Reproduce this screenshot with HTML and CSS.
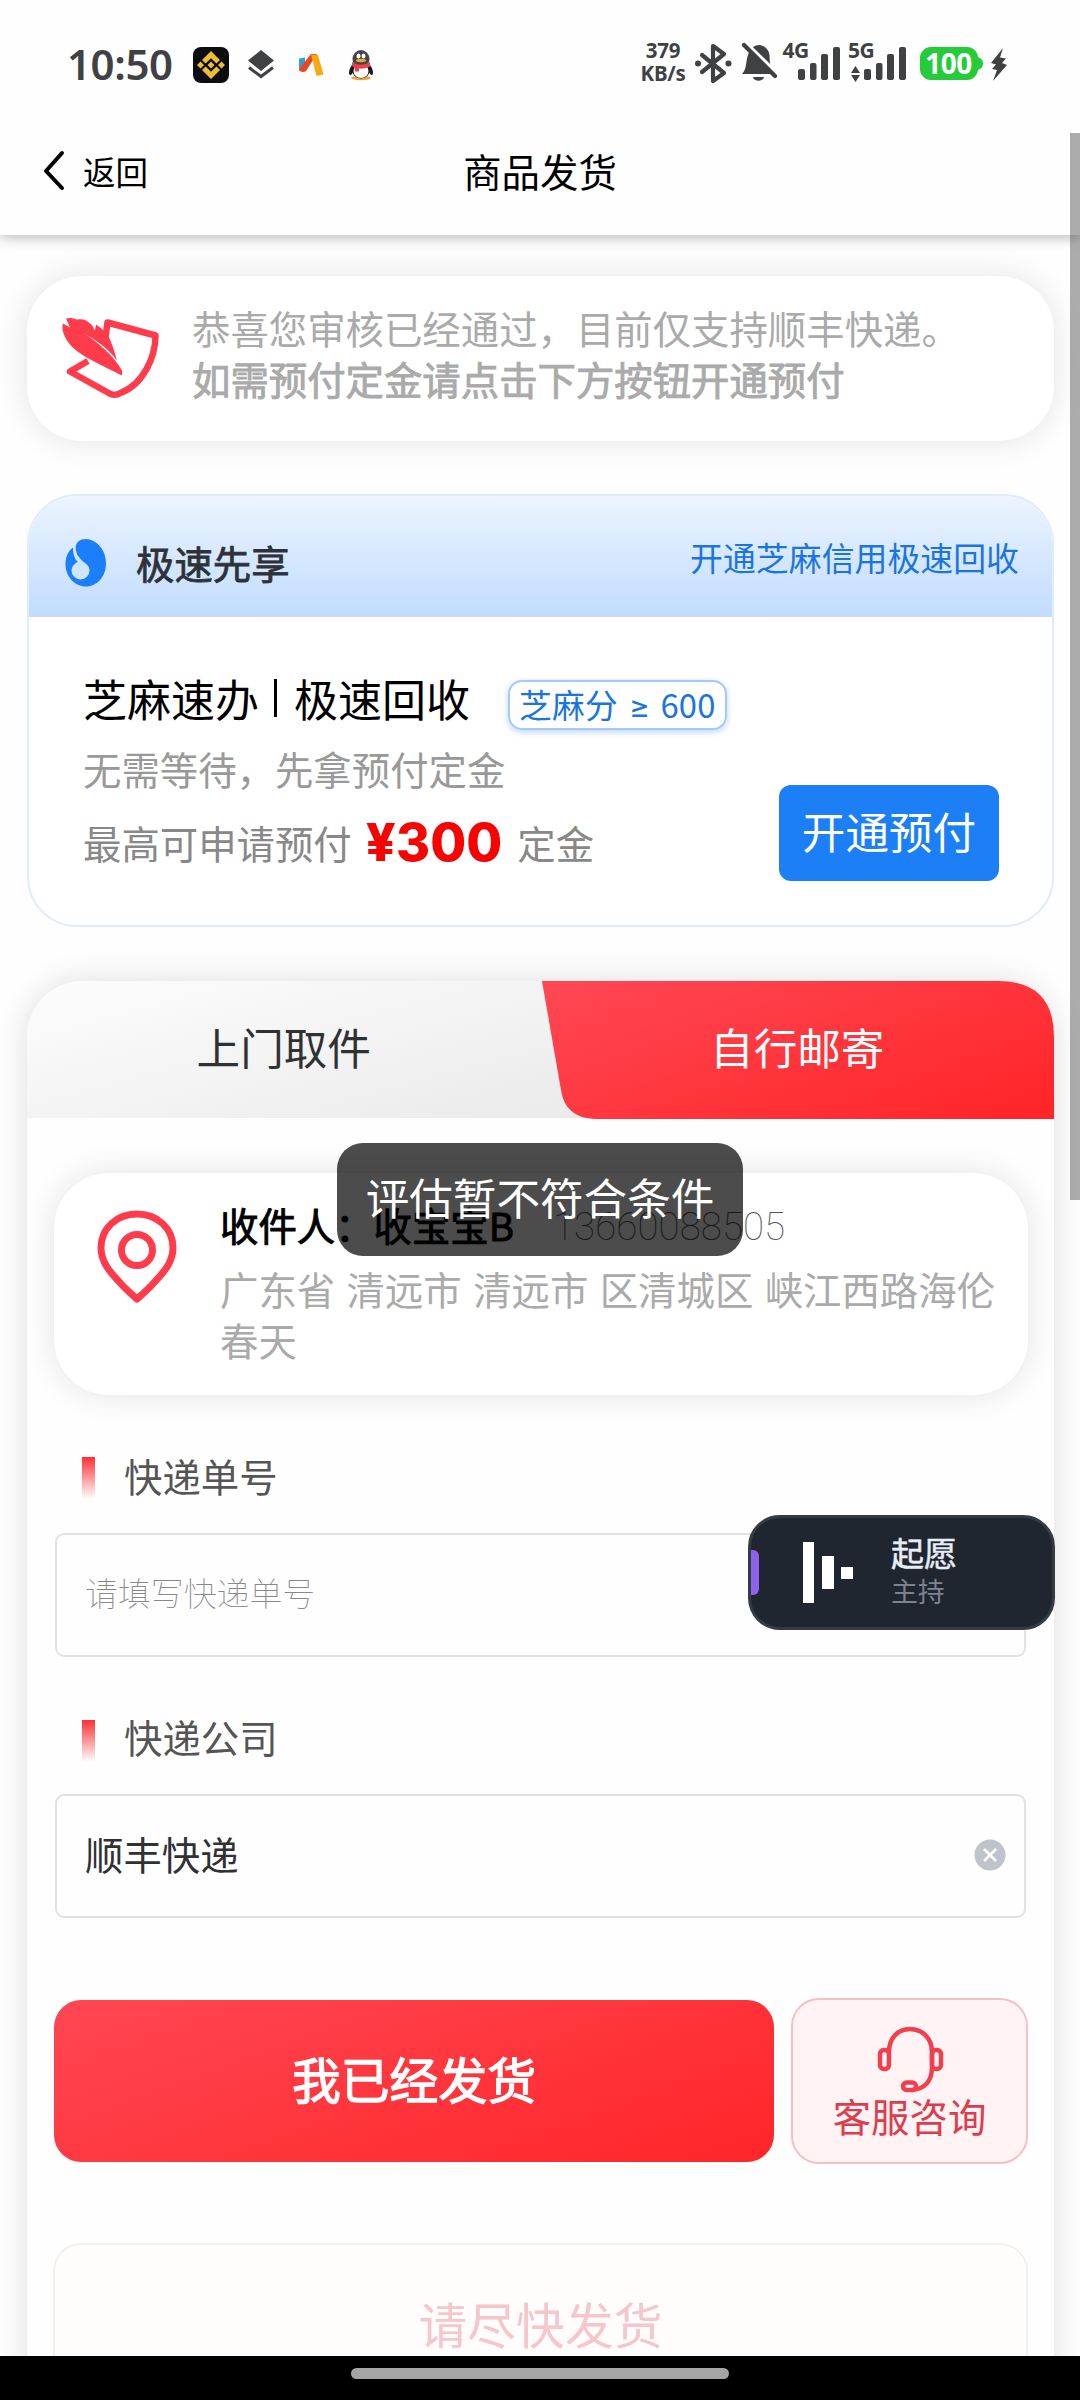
FILE: index.html
```html
<!DOCTYPE html>
<html lang="zh-CN">
<head>
<meta charset="utf-8">
<title>商品发货</title>
<link rel="stylesheet" href="styles.css">
</head>
<body>
<div class="screen">
  <div class="status">
    <span class="clock">10:50</span>
    <svg class="app-icons" width="190" height="44" viewBox="190 42 190 44">
      <rect x="193" y="47" width="36" height="36" rx="8" fill="#0b0d10"/>
      <g fill="#edbd33">
        <path d="M211 51l9 9-3.6 3.6-5.4-5.4-5.4 5.4-3.6-3.6zM211 79l9-9-3.6-3.6-5.4 5.4-5.4-5.4-3.6 3.6zM211 61.500l3.500 3.500-3.500 3.500-3.500-3.500zM200.500 61.500l3.500 3.500-3.500 3.500-3.500-3.500zM221.500 61.500l3.500 3.500-3.500 3.500-3.500-3.500z"/>
      </g>
      <path d="M261 50l13 10.500-13 10.500-13-10.500z" fill="#404143"/>
      <path d="M249 67.500l12 9 12-9" fill="none" stroke="#404143" stroke-width="3"/>
      <path d="M299 58.500l6-1v13h-6z" fill="#2ea0dc"/>
      <path d="M311 54h6l-11 17c-2 2-7 1-7-2z" fill="#e8481f"/>
      <path d="M311 54.500l7 .5 5.500 19.500-7 1.500z" fill="#f6ab13"/>
      <ellipse cx="361" cy="78" rx="10" ry="2.200" fill="#eda53a"/>
      <path d="M353 64c-4 4-5 10-3 11 2 0 2-2 3-3zM369 64c4 4 5 10 3 11-2 0-2-2-3-3z" fill="#17191c"/>
      <ellipse cx="361" cy="70" rx="9" ry="8.500" fill="#17191c"/>
      <ellipse cx="361" cy="71" rx="7.500" ry="7" fill="#fff"/>
      <ellipse cx="361" cy="59" rx="8.500" ry="9" fill="#44464a"/>
      <ellipse cx="358.500" cy="56" rx="2" ry="2.500" fill="#fff"/><ellipse cx="363.500" cy="56" rx="2" ry="2.500" fill="#fff"/>
      <ellipse cx="361" cy="60.500" rx="5" ry="1.700" fill="#eca62e"/>
      <path d="M352 62c5 3.500 13 3.500 18 0v4.500c-3 1.500-7 2.500-11 2v3h-4v-4c-2-.5-3-1.500-3-2z" fill="#ee3f50"/>
    </svg>
    <span class="rate"><b>379</b><b>KB/s</b></span>
    <svg class="sys-icons" width="320" height="44" viewBox="690 40 320 44">
      <g fill="none" stroke="#404143" stroke-width="4.200" stroke-linecap="round" stroke-linejoin="round">
        <path d="M702 55l22 18-11 8V46l11 8-22 18"/>
      </g>
      <circle cx="698" cy="63.500" r="3" fill="#404143"/><circle cx="728.500" cy="63.500" r="3" fill="#404143"/>
      <path d="M742 74c5-5 3.500-12 6-19 2-7 7-10 11-10s10 4 10.500 10c.5 7 0 14 6 19z" fill="#404143"/>
      <path d="M753 77h11c-1 5-10 5-11 0z" fill="#404143"/>
      <path d="M744.500 42.500l34 33" stroke="#fff" stroke-width="5"/>
      <path d="M744 45l31 31" stroke="#404143" stroke-width="4.200" stroke-linecap="round"/>
      <text class="net" x="782.500" y="58">4G</text>
      <text class="net" x="848" y="58">5G</text>
      <g fill="#404143">
        <rect x="798" y="69" width="7" height="11" rx="2"/><rect x="810" y="63" width="6.500" height="17" rx="2"/><rect x="821" y="54" width="7" height="26" rx="2"/><rect x="833" y="47" width="7" height="33" rx="2"/>
        <rect x="864" y="69" width="7" height="11" rx="2"/><rect x="876" y="63" width="6.500" height="17" rx="2"/><rect x="887" y="54" width="7" height="26" rx="2"/><rect x="899" y="47" width="7" height="33" rx="2"/>
        <path d="M851 73l4.500-7 4.500 7zM851 75h9l-4.500 7z"/>
        <path d="M1003 48l-12 15 5 1.500-4 4.500 5 1-4 11 14-16-5-2 4-4.500-6-1z"/>
      </g>
      <rect x="920" y="47" width="58" height="33" rx="11" fill="#25cb3a"/>
      <path d="M977 57q6 1 6 6.500t-6 6.500z" fill="#25cb3a"/>
      <text class="pct" x="948.500" y="73.500" text-anchor="middle">100</text>
    </svg>
  </div>

  <div class="nav">
    <div class="back">
      <svg width="24" height="42" viewBox="0 0 24 42"><path d="M20 3L4 21l16 17" fill="none" stroke="#000" stroke-width="4" stroke-linecap="round" stroke-linejoin="round"/></svg>
      <span>返回</span>
    </div>
    <div class="title">商品发货</div>
  </div>

  <div class="content">
    <div class="card notice">
      <svg width="100" height="84" viewBox="60 317 100 84">
        <path d="M105 342l2.500-18.500 48 13c0 21-12 49-35 57.500q-5 3-10 1L70 372.500 88 362" fill="none" stroke="#ff3b4c" stroke-width="6.500" stroke-linejoin="round"/>
        <path d="M66 319.500c4-1 7-.5 11 1 6-1 9 0 13 4 3 2 3 4 5 7l1-6c7 5 11 9 14 15 3 7 5 14 7 21-9-12-20-20-33-27 14 9 29 21 38 37v5c-19-10-42-19-52-31-6-7-9-16-7-21l7 4z" fill="#ff3b4c"/>
      </svg>
      <div class="notice-text"><p>恭喜您审核已经通过，目前仅支持顺丰快递。</p><p class="medium">如需预付定金请点击下方按钮开通预付</p></div>
    </div>

    <div class="credit">
      <div class="credit-head">
        <svg width="42" height="48" viewBox="0 0 42 48">
          <path d="M21 0c12 1 20 12 20 24 0 14-9 23.500-20 23.500S.5 38 .5 25C.5 18 3 12 8 8.500c0 6 1 9 3.500 13.500C14 18 11 14 10.500 9 11 3 15 0 21 0z" fill="#1b7ffb"/>
          <path d="M9.500 9c-2.500 6 3 9 3 14-4 2-6 5-6 8.500a9 9 0 0018 0c0-6-5-7-8.500-11-3-4-6-6-5.500-12z" fill="#d2e5fe"/>
        </svg>
        <span class="credit-title">极速先享</span>
        <span class="credit-link">开通芝麻信用极速回收</span>
      </div>
      <div class="credit-body">
        <div class="credit-info">
          <div class="fast"><span>芝麻速办</span><i></i><span>极速回收</span><span class="badge">芝麻分<span class="ge">≥</span>600</span></div>
          <p class="wait">无需等待，先拿预付定金</p>
          <p class="max">最高可申请预付<strong>¥300</strong>定金</p>
        </div>
        <div class="open">开通预付</div>
      </div>
    </div>

    <div class="ship">
      <div class="tabs">
        <svg class="tab-bg" width="513" height="138" viewBox="0 0 513 138">
          <defs><linearGradient id="red" gradientUnits="userSpaceOnUse" x1="208" y1="-64" x2="305" y2="202"><stop offset="0" stop-color="#ff4753"/><stop offset="1" stop-color="#ff2528"/></linearGradient></defs>
          <path d="M1 0h456q56 0 56 56v82H54q-30-1-34-29z" fill="url(#red)"/>
        </svg>
        <div class="tab">上门取件</div><div class="tab active">自行邮寄</div>
      </div>
      <div class="card address">
        <svg width="82" height="96" viewBox="0 0 82 96"><path d="M41 6C21 6 5 20 5 40c0 16 12 27 22 38q7 7 14 13 7-6 14-13c10-11 22-22 22-38C77 20 61 6 41 6z" fill="none" stroke="#ff3b4c" stroke-width="7" stroke-linejoin="round"/><circle cx="41" cy="42" r="15.500" fill="none" stroke="#ff3b4c" stroke-width="7"/></svg>
        <div class="addr-text">
          <div class="who"><span class="medium">收件人：收宝宝B</span><span class="phone">13660088505</span></div>
          <p>广东省 清远市 清远市 区清城区 峡江西路海伦春天</p>
        </div>
      </div>
      <div class="label"><i></i>快递单号</div>
      <div class="field placeholder">请填写快递单号</div>
      <div class="label second"><i></i>快递公司</div>
      <div class="field"><span>顺丰快递</span>
        <svg width="32" height="32" viewBox="0 0 32 32"><circle cx="16" cy="16" r="15.500" fill="#bfc4cc"/><path d="M10 10l12 12M22 10L10 22" stroke="#fff" stroke-width="2.600"/></svg>
      </div>
      <div class="actions">
        <div class="sent">我已经发货</div>
        <div class="service">
          <svg width="68" height="68" viewBox="876 2025 68 68" fill="none" stroke="#f23f50" stroke-width="4.500"><path d="M889 2052c0-14 9-23 21-23s22 9 22 23v15c0 14-7 22-20 23"/><rect x="880" y="2050" width="9" height="19" rx="4"/><rect x="932" y="2050" width="9" height="19" rx="4"/><rect x="903" y="2082.500" width="13" height="7.500" rx="3.700"/></svg>
          <span>客服咨询</span>
        </div>
      </div>
      <div class="hurry">请尽快发货</div>
    </div>
  </div>

  <div class="home"><i></i></div>

  <div class="scroll"></div>
  <div class="toast">评估暂不符合条件</div>
  <div class="meeting">
    <i class="mark"></i>
    <svg width="50" height="62" viewBox="0 0 50 62" fill="#fff"><path d="M0 0h11v61H0zM19 14h12v33H19zM38 25h12v12H38z"/></svg>
    <div class="meeting-text"><b>起愿</b><span>主持</span></div>
  </div>
</div>
</body>
</html>
```
FILE: styles.css
```css
* { box-sizing: border-box; }
body { margin: 0; background: #fefefe; }
p { margin: 0; }
i { display: block; font-style: normal; }

.screen {
  position: relative;
  display: flex;
  flex-direction: column;
  width: 1080px;
  height: 2400px;
  overflow: hidden;
  background: #fefefe;
  font: 400 38.4px/51px "Noto Sans CJK SC", sans-serif;
  color: #000;
}
.medium { -webkit-text-stroke: 0.9px currentColor; }

/* system status bar */
.status {
  display: flex;
  flex: none;
  align-items: center;
  height: 130px;
  padding: 0 70px 2px 67px;
  color: #404143;
}
.clock { width: 123px; font: 600 42px/44px "Noto Sans", sans-serif; letter-spacing: -0.4px; }
.app-icons { flex: none; }
.rate {
  display: flex;
  flex-direction: column;
  align-items: center;
  width: 50px;
  margin: 0 1px 4px 258px;
  font: 700 20.500px/23px "Noto Sans", sans-serif;
  letter-spacing: -0.3px;
}
.rate b { font-weight: 700; }
.sys-icons { flex: none; margin: 0 0 4px 1px; overflow: visible; }
.net { font: 700 21px "Noto Sans", sans-serif; fill: #404143; letter-spacing: -0.5px; }
.pct { font: 700 28px "Noto Sans", sans-serif; fill: #fff; letter-spacing: -0.5px; }

/* page header */
.nav {
  display: grid;
  grid-template-columns: 1fr auto 1fr;
  flex: none;
  align-items: center;
  height: 105px;
  padding: 0 42px 24px;
  box-shadow: 0 3px 12px rgba(0, 0, 0, 0.26);
  clip-path: inset(0 0 -20px 0);
}
.back { display: flex; align-items: center; gap: 17px; font-size: 32.500px; }
.title { line-height: 81px; }

.content { flex: 1; min-height: 0; overflow: hidden; padding: 41px 26px 0 27px; clip-path: inset(0); }
.card { background: #fff; border-radius: 55px; box-shadow: 0 0 32px rgba(0, 0, 0, 0.11); }

.notice { display: flex; height: 165px; padding: 26px 33px; gap: 32px; color: #aaa; }
.notice svg { margin-top: 14px; flex: none; }
.notice-text { white-space: nowrap; }

/* credit card */
.credit {
  margin-top: 53px;
  height: 433px;
  border: 2px solid #dfecfd;
  border-radius: 50px;
  overflow: hidden;
  background: #fff;
}
.credit-head {
  display: flex;
  align-items: center;
  height: 121px;
  padding: 12px 33px 0 36px;
  background: linear-gradient(#ecf4ff, #c1dcfe);
}
.credit-title { margin-left: 29px; color: #2d3238; -webkit-text-stroke: 0.8px currentColor; }
.credit-link { margin: 0 0 12px auto; font-size: 32.900px; color: #1b75dd; }
.credit-body { display: flex; justify-content: space-between; padding: 53px 53px 0 54px; }
.fast { display: flex; align-items: center; height: 56px; font-size: 44px; line-height: 56px; }
.fast > i { width: 3px; height: 38px; margin: 0 17px 0 15px; background: #000; }
.badge {
  height: 50px;
  margin: 14px 0 0 38px;
  padding: 0 9px;
  border: 2px solid #a5c9f8;
  border-radius: 14px;
  box-shadow: 0 2px 6px rgba(27, 117, 221, 0.3);
  font-size: 32.800px;
  line-height: 44px;
  letter-spacing: 0.2px;
  color: #1b75dd;
  white-space: nowrap;
}
.ge { margin: 0 10px 0 11px; font: 400 32px/30px Inter, sans-serif; }
.wait { margin-top: 17px; color: #999; }
.max { display: flex; align-items: center; height: 60px; margin-top: 18px; color: #888; }
.max strong { margin: 1px 15px 0 14px; font: 800 52px/60px Inter, sans-serif; color: #f80202; letter-spacing: 0.1px; }
.open {
  width: 220px;
  height: 96px;
  margin-top: 115px;
  border-radius: 12px;
  background: #1c7ff6;
  color: #fff;
  font-size: 43.600px;
  line-height: 90px;
  text-align: center;
}

/* shipping card */
.ship {
  margin-top: 54px;
  height: 1500px;
  padding: 0 26px 0 27px;
  border-radius: 56px 56px 0 0;
  background: #fefefe;
  box-shadow: 0 0 32px rgba(0, 0, 0, 0.13);
}
.tabs {
  position: relative;
  display: grid;
  grid-template-columns: 1fr 1fr;
  height: 137px;
  margin: 0 -26px 0 -27px;
  border-radius: 56px 56px 0 0;
  background: linear-gradient(165deg, #fdfdfd, #e2e2e2);
  color: #303133;
  font-size: 43.600px;
  line-height: 130px;
  text-align: center;
}
.tab-bg { position: absolute; top: 0; right: 0; }
.tab { position: relative; }
.active { color: #fff; }
.address { display: flex; height: 222px; margin-top: 55px; padding: 26px 20px 0 42px; gap: 42px; }
.address svg { flex: none; margin-top: 9px; }
.who { display: flex; height: 51px; }
.phone { margin-left: 39px; font: 100 38.400px/56px Roboto, sans-serif; color: #555; letter-spacing: 0.1px; }
.addr-text p { margin-top: 13px; color: #aaa; word-spacing: 2.800px; }
.label { display: flex; align-items: flex-start; gap: 29px; height: 51px; margin: 57px 0 0 28px; color: #555; line-height: 47px; }
.label.second { margin-top: 56px; }
.label i { width: 13px; height: 42px; margin-top: 5px; background: linear-gradient(#fb3136, #ff3b4000); }
.label.second i { margin-top: 7px; }
.field {
  display: flex;
  align-items: center;
  justify-content: space-between;
  height: 124px;
  margin: 30px 2px 0 1px;
  padding: 0 18px 5px 28px;
  border: 2px solid #e2e2e2;
  border-radius: 9px;
  color: #303133;
}
.field svg { margin-top: 2px; }
.placeholder { padding-bottom: 7px; font-size: 32.900px; font-weight: 100; color: #888; }
.actions { display: flex; align-items: center; justify-content: space-between; height: 166px; margin-top: 80px; }
.sent {
  width: 720px;
  height: 162px;
  border-radius: 27px;
  background: linear-gradient(160deg, #ff4753, #ff2528);
  color: #fff;
  font-size: 48.800px;
  line-height: 155px;
  text-align: center;
  -webkit-text-stroke: 1.3px #fff;
}
.service {
  display: flex;
  flex-direction: column;
  align-items: center;
  width: 237px;
  height: 166px;
  padding-top: 25px;
  border: 2px solid #f3c0c3;
  border-radius: 28px;
  background: #fff4f3;
  color: #df3b4e;
}
.service span { margin-top: -3px; }
.hurry {
  height: 200px;
  margin: 79px 0 0 -1px;
  border: 2px solid #f6eeed;
  border-radius: 28px;
  background: #fffdfb;
  color: #f5c6cc;
  font-size: 48.800px;
  line-height: 156px;
  text-align: center;
}

/* gesture bar */
.home { position: relative; display: flex; flex: none; justify-content: center; height: 44px; padding-top: 12px; background: #000; }
.home i { width: 378px; height: 11px; border-radius: 6px; background: #a5a5a5; }

/* overlays */
.scroll { position: absolute; top: 133px; right: 0; width: 10px; height: 1067px; background: rgba(0, 0, 0, 0.32); }
.toast {
  position: absolute;
  top: 1143px;
  left: 337px;
  width: 406px;
  height: 113px;
  border-radius: 26px;
  background: rgba(0, 0, 0, 0.7);
  color: #fff;
  font-size: 43.600px;
  line-height: 107px;
  text-align: center;
}
.meeting {
  position: absolute;
  top: 1515px;
  left: 748px;
  display: flex;
  align-items: center;
  width: 307px;
  height: 115px;
  border: 3px solid #343b43;
  border-radius: 32px;
  background: #1f262f;
}
.mark { width: 8px; height: 45px; border-radius: 0 6px 6px 0; background: #8f62ee; }
.meeting svg { margin-left: 44px; }
.meeting-text { display: flex; flex-direction: column; margin: -4px 0 0 38px; font-size: 33px; line-height: 40px; color: #e8ecf5; }
.meeting-text b { font-weight: 400; -webkit-text-stroke: 0.500px currentColor; }
.meeting-text span { font-size: 26.800px; line-height: 37px; color: #7e8390; }
```
